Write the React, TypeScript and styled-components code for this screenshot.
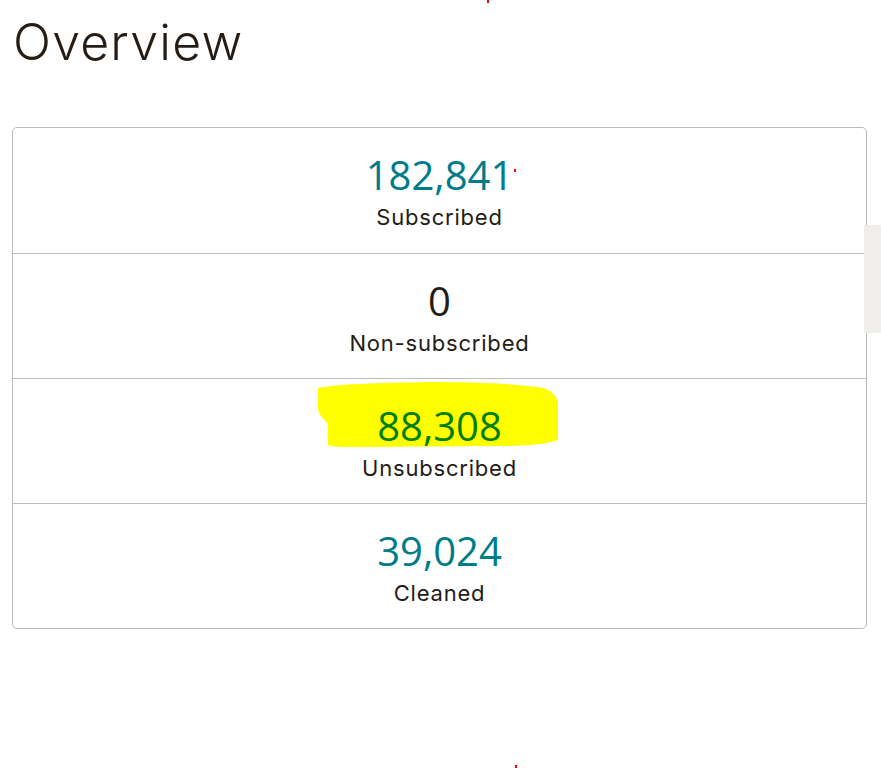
import styled, { createGlobalStyle } from 'styled-components';

const GlobalStyle = createGlobalStyle`
  html, body {
    margin: 0;
    padding: 0;
    background: #ffffff;
  }
  body {
    font-family: Inter, 'Open Sans', 'Liberation Sans', sans-serif;
    color: #241c15;
  }
`;

const Page = styled.div`
  position: relative;
  display: flex;
  flex-direction: column;
  gap: 51px;
  width: 881px;
  height: 768px;
  overflow: hidden;
  padding: 8px 14px 0 12px;
  box-sizing: border-box;
`;

const Title = styled.h1`
  margin: 0;
  padding-left: 1px;
  font-size: 50px;
  font-weight: 300;
  line-height: 68px;
  letter-spacing: 1.2px;
  color: #241c15;
`;

const StatsCard = styled.div`
  display: flex;
  flex-direction: column;
  border: 1px solid #bcbcbc;
  border-radius: 5px;
  background: #fff;
`;

const StatRow = styled.div`
  position: relative;
  display: flex;
  flex-direction: column;
  align-items: center;
  gap: 3px;
  height: 125px;
  padding-top: 22px;
  box-sizing: border-box;
  & + & {
    border-top: 1px solid #bcbcbc;
  }
`;

const StatValue = styled.div<{ $tone: 'teal' | 'dark' | 'green' }>`
  position: relative;
  z-index: 1;
  font-family: 'Open Sans', sans-serif;
  font-size: 40px;
  line-height: 50px;
  color: ${(p) =>
    p.$tone === 'teal' ? '#007c89' : p.$tone === 'green' ? '#008000' : '#241c15'};
`;

const StatLabel = styled.div`
  font-size: 22px;
  line-height: 28px;
  font-weight: 400;
  letter-spacing: 0.8px;
  color: #241c15;
`;

const Marker = styled.svg`
  position: absolute;
  left: 305px;
  top: 3px;
  width: 240px;
  height: 65px;
  z-index: 0;
`;

const ScrollThumb = styled.div`
  position: absolute;
  right: 0;
  top: 225px;
  width: 17px;
  height: 108px;
  background: #efeeea;
`;

const Dot = styled.span<{ $x: number; $y: number }>`
  position: absolute;
  left: ${(p) => p.$x}px;
  top: ${(p) => p.$y}px;
  width: 2px;
  height: 3px;
  background: #ff0000;
`;

type Stat = { value: string; label: string; tone: 'teal' | 'dark' | 'green'; marked?: boolean };

const stats: Stat[] = [
  { value: '182,841', label: 'Subscribed', tone: 'teal' },
  { value: '0', label: 'Non-subscribed', tone: 'dark' },
  { value: '88,308', label: 'Unsubscribed', tone: 'green', marked: true },
  { value: '39,024', label: 'Cleaned', tone: 'teal' },
];

export default function App() {
  return (
    <>
      <GlobalStyle />
      <Page>
        <Title>Overview</Title>
        <StatsCard>
          {stats.map((s) => (
            <StatRow key={s.label}>
              {s.marked && (
                <Marker viewBox="0 0 240 65" preserveAspectRatio="none">
                  {/* highlighter stroke behind the unsubscribed count */}
                  <path
                    d="M0 6 C20 2 60 1 110 0 C160 0 200 2 225 6 C235 9 238 14 240 20 L240 58 C230 62 210 64 180 64 L40 65 C25 65 14 65 10 63 L10 42 C6 38 2 34 0 28 Z"
                    fill="#ffff00"
                  />
                </Marker>
              )}
              <StatValue $tone={s.tone}>{s.value}</StatValue>
              <StatLabel>{s.label}</StatLabel>
            </StatRow>
          ))}
        </StatsCard>
        <ScrollThumb />
        <Dot $x={487} $y={0} />
        <Dot $x={514} $y={169} />
        <Dot $x={515} $y={765} />
      </Page>
    </>
  );
}
